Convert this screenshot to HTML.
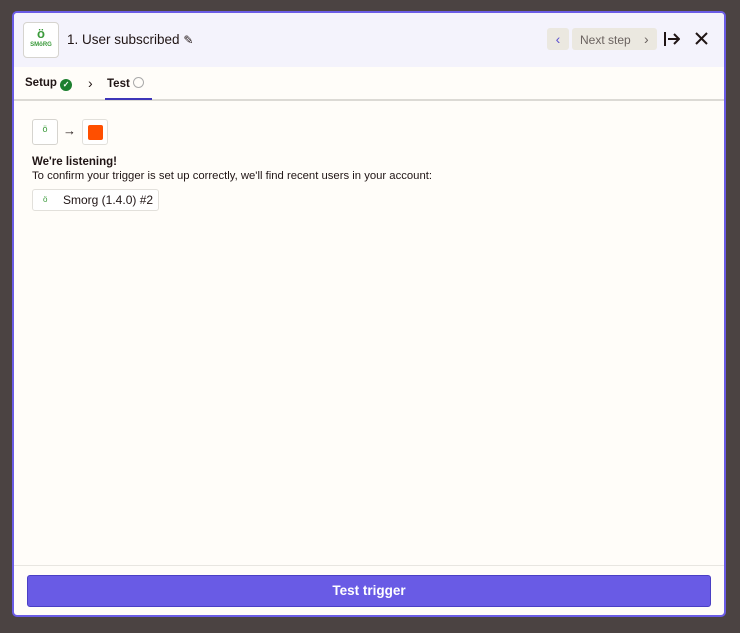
<!DOCTYPE html>
<html><head><style>
*{box-sizing:border-box;margin:0;padding:0}
body{width:740px;height:633px;background:#4b4342;font-family:"Liberation Sans",sans-serif;position:relative;overflow:hidden;color:#201515}
.panel{position:absolute;left:12px;top:11px;width:714px;height:606px;background:#fffdf9;border:2px solid #6a5ce5;border-radius:5px;overflow:hidden}
.hdr{position:absolute;left:0;top:0;right:0;height:54px;background:#f4f3fc}
.logo{position:absolute;left:9px;top:9px;width:36px;height:36px;border:1px solid #d6d4cf;border-radius:4px;background:#fff;text-align:center;color:#3a9a3a}
.title{position:absolute;left:53px;top:19px;font-size:13.5px}
.abs{position:absolute}
.tabs{position:absolute;left:0;top:54px;right:0;height:34px;border-bottom:2px solid #dcdad5;font-size:11.5px;font-weight:bold}
.foot{position:absolute;left:0;top:552px;right:0;border-top:1px solid #e8e6e1;height:60px}
.btn{position:absolute;left:13px;top:9px;width:684px;height:32px;background:#695be5;border:1px solid #4a3fc4;border-radius:3px;color:#fff;font-weight:bold;font-size:13.5px;text-align:center;line-height:30px}
</style></head><body>
<div class="panel">
 <div class="hdr">
  <div class="logo"><div style="font-size:13px;font-weight:bold;margin-top:4px;line-height:13px">ö</div><div style="font-size:6px;font-weight:bold;margin-top:2px">SMöRG</div></div>
  <div class="title">1. User subscribed <span style="font-size:12px">✎</span></div>
  <div class="abs" style="left:533px;top:15px;width:22px;height:22px;background:#ebe8e0;border-radius:3px;color:#5a4fd0;text-align:center;line-height:22px;font-size:14px">‹</div>
  <div class="abs" style="left:558px;top:15px;width:85px;height:22px;background:#ebe8e0;border-radius:3px;color:#6b6360;font-size:12px;line-height:22px;padding-left:8px">Next step <span style="margin-left:10px;font-size:14px">›</span></div>
  <svg class="abs" style="left:650px;top:18px" width="16" height="16" viewBox="0 0 16 16" fill="none" stroke="#201515" stroke-width="2"><path d="M1 1v14M4 8h11M10 3l5 5-5 5"/></svg>
  <svg class="abs" style="left:681px;top:19px" width="13" height="13" viewBox="0 0 13 13" stroke="#201515" stroke-width="2"><path d="M1 1l11 11M12 1L1 12"/></svg>
 </div>
 <div class="tabs">
  <div class="abs" style="left:11px;top:10px">Setup <span style="display:inline-block;width:12px;height:12px;border-radius:50%;background:#1c7f2f;color:#fff;font-size:8px;text-align:center;line-height:12px;vertical-align:-1px">✓</span></div>
  <div class="abs" style="left:74px;top:8px;font-weight:normal;font-size:14px">›</div>
  <div class="abs" style="left:93px;top:10px">Test <span style="display:inline-block;width:11px;height:11px;border-radius:50%;border:1px solid #aaa;vertical-align:-1px"></span></div>
  <div class="abs" style="left:91px;top:31px;width:47px;height:2px;background:#3d35b8"></div>
 </div>
 <div class="abs" style="left:18px;top:106px;width:26px;height:26px;border:1px solid #d6d4cf;border-radius:3px;background:#fff;text-align:center;color:#3a9a3a;font-size:9px;line-height:18px">ö</div>
 <div class="abs" style="left:49px;top:110px;font-size:13px">→</div>
 <div class="abs" style="left:68px;top:106px;width:26px;height:26px;border:1px solid #e2e0db;border-radius:3px;background:#fff"><div style="margin:5px;width:15px;height:15px;background:#ff4f00;border-radius:2px"></div></div>
 <div class="abs" style="left:18px;top:143px;font-size:11.5px;font-weight:bold">We're listening!</div>
 <div class="abs" style="left:18px;top:157px;font-size:11.3px">To confirm your trigger is set up correctly, we'll find recent users in your account:</div>
 <div class="abs" style="left:18px;top:176px;width:127px;height:22px;border:1px solid #e2e0db;border-radius:3px;background:#fff;font-size:12px;line-height:20px;padding-left:30px">Smorg (1.4.0) #2<span class="abs" style="left:10px;top:0;color:#3a9a3a;font-size:8px">ö</span></div>
 <div class="foot"><div class="btn">Test trigger</div></div>
</div>
</body></html>
